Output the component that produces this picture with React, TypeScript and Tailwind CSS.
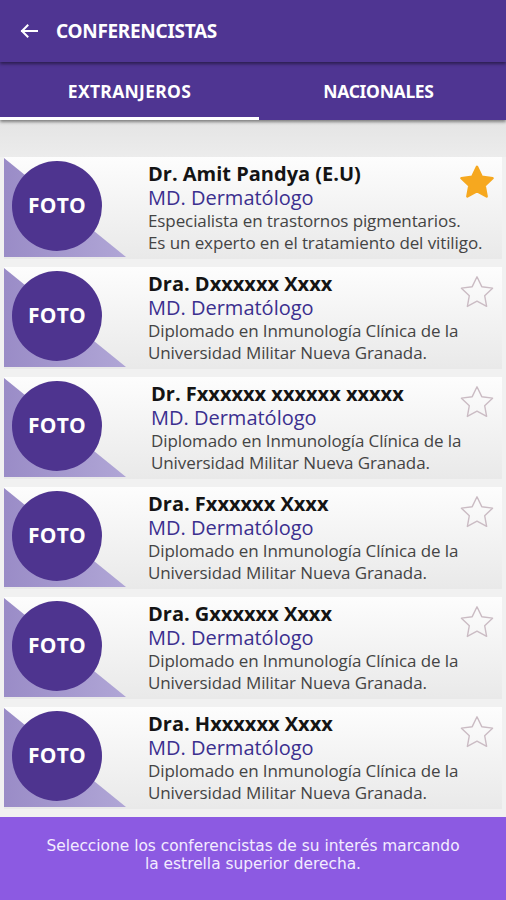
import React from "react";

type Speaker = { name: string; desc1: string; desc2: string; fav: boolean; indent?: boolean };

const speakers: Speaker[] = [
  { name: "Dr. Amit Pandya (E.U)", desc1: "Especialista en trastornos pigmentarios.", desc2: "Es un experto en el tratamiento del vitiligo.", fav: true },
  { name: "Dra. Dxxxxxx Xxxx", desc1: "Diplomado en Inmunología Clínica de la", desc2: "Universidad Militar Nueva Granada.", fav: false },
  { name: "Dr. Fxxxxxx xxxxxx xxxxx", desc1: "Diplomado en Inmunología Clínica de la", desc2: "Universidad Militar Nueva Granada.", fav: false, indent: true },
  { name: "Dra. Fxxxxxx Xxxx", desc1: "Diplomado en Inmunología Clínica de la", desc2: "Universidad Militar Nueva Granada.", fav: false },
  { name: "Dra. Gxxxxxx Xxxx", desc1: "Diplomado en Inmunología Clínica de la", desc2: "Universidad Militar Nueva Granada.", fav: false },
  { name: "Dra. Hxxxxxx Xxxx", desc1: "Diplomado en Inmunología Clínica de la", desc2: "Universidad Militar Nueva Granada.", fav: false },
];

function Star({ filled }: { filled: boolean }) {
  return (
    <svg width="38" height="36" viewBox="0 0 24 23" className="block">
      <path
        d="M12 1.8l3.05 6.3 6.9.95-5.05 4.8 1.25 6.85L12 17.4l-6.15 3.3 1.25-6.85-5.05-4.8 6.9-.95z"
        fill={filled ? "#f6a81f" : "none"}
        stroke={filled ? "#f6a81f" : "#cbbcc4"}
        strokeWidth={filled ? 1.6 : 0.9}
        strokeLinejoin="round"
      />
    </svg>
  );
}

function Card({ s }: { s: Speaker }) {
  return (
    <div className="relative flex h-[102px] bg-gradient-to-b from-[#fdfdfd] to-[#e9e9e9]">
      <div className="relative w-[130px] shrink-0">
        <svg className="absolute inset-0" width="130" height="102" viewBox="0 0 130 102">
          <defs>
            <linearGradient id="tri" x1="0" y1="0" x2="1" y2="0">
              <stop offset="0" stopColor="#9a8cc7" />
              <stop offset="1" stopColor="#b0a6d6" />
            </linearGradient>
          </defs>
          <polygon points="0,1 0,100 122,100" fill="url(#tri)" />
        </svg>
        <div className="absolute left-[8px] top-[4px] flex h-[90px] w-[90px] items-center justify-center rounded-full bg-[#4e348f]">
          <span className="text-[21px] font-bold text-white [font-family:'Open_Sans',sans-serif] tracking-[0.2px]">FOTO</span>
        </div>
      </div>
      <div className={`flex flex-col pt-[4px] ${s.indent ? "pl-[17px]" : "pl-[14px]"} [font-family:'Open_Sans',sans-serif]`}>
        <div className="text-[20px] font-bold leading-[26px] text-[#141414]">{s.name}</div>
        <div className="text-[20px] leading-[22px] text-[#3b2f8f]">MD. Dermatólogo</div>
        <div className="mt-[1px] text-[17px] leading-[22px] tracking-[-0.1px] text-[#444]">{s.desc1}</div>
        <div className="text-[17px] leading-[22px] tracking-[-0.1px] text-[#444]">{s.desc2}</div>
      </div>
      <div className="absolute right-[6px] top-[7px]">
        <Star filled={s.fav} />
      </div>
    </div>
  );
}

export default function App() {
  return (
    <div className="flex h-[900px] w-[506px] flex-col overflow-hidden bg-[#f1f1f1]">
      <div className="relative z-20 flex h-[62px] shrink-0 items-center bg-[#4f3592] shadow-[0_2px_3px_rgba(0,0,0,0.45)]">
        <svg width="20" height="16" viewBox="0 0 20 16" className="ml-[19px]">
          <path d="M18 8H3M8.5 2.5L3 8l5.5 5.5" fill="none" stroke="#ffffff" strokeWidth="2" strokeLinecap="square" />
        </svg>
        <span className="ml-[17px] text-[19px] font-bold text-white [font-family:'Noto_Sans',sans-serif] tracking-[-0.3px]">CONFERENCISTAS</span>
      </div>
      <div className="relative z-10 flex h-[58px] shrink-0 bg-[#4f3592] shadow-[0_2px_3px_rgba(0,0,0,0.45)]">
        <div className="relative flex w-[259px] items-center justify-center">
          <span className="text-[17.5px] font-bold text-white [font-family:'Noto_Sans',sans-serif] tracking-[0.3px]">EXTRANJEROS</span>
          <div className="absolute bottom-0 left-0 right-0 h-[3px] bg-white" />
        </div>
        <div className="flex flex-1 items-center justify-center pr-[8px]">
          <span className="text-[17.5px] font-bold text-white [font-family:'Noto_Sans',sans-serif] tracking-[-0.3px]">NACIONALES</span>
        </div>
      </div>
      <div className="h-[37px] shrink-0 bg-gradient-to-b from-[#e4e4e4] to-[#ececec]" />
      <div className="flex flex-col gap-[8px] px-[4px]">
        {speakers.map((s, i) => (
          <Card key={i} s={s} />
        ))}
      </div>
      <div className="mt-[8px] flex flex-1 flex-col items-center bg-[#8c5ae2] pt-[20px] text-center text-[15.4px] leading-[18px] text-[#f3ecff] [font-family:'DejaVu_Sans',sans-serif]">
        <div>Seleccione los conferencistas de su interés marcando</div>
        <div>la estrella superior derecha.</div>
      </div>
    </div>
  );
}
